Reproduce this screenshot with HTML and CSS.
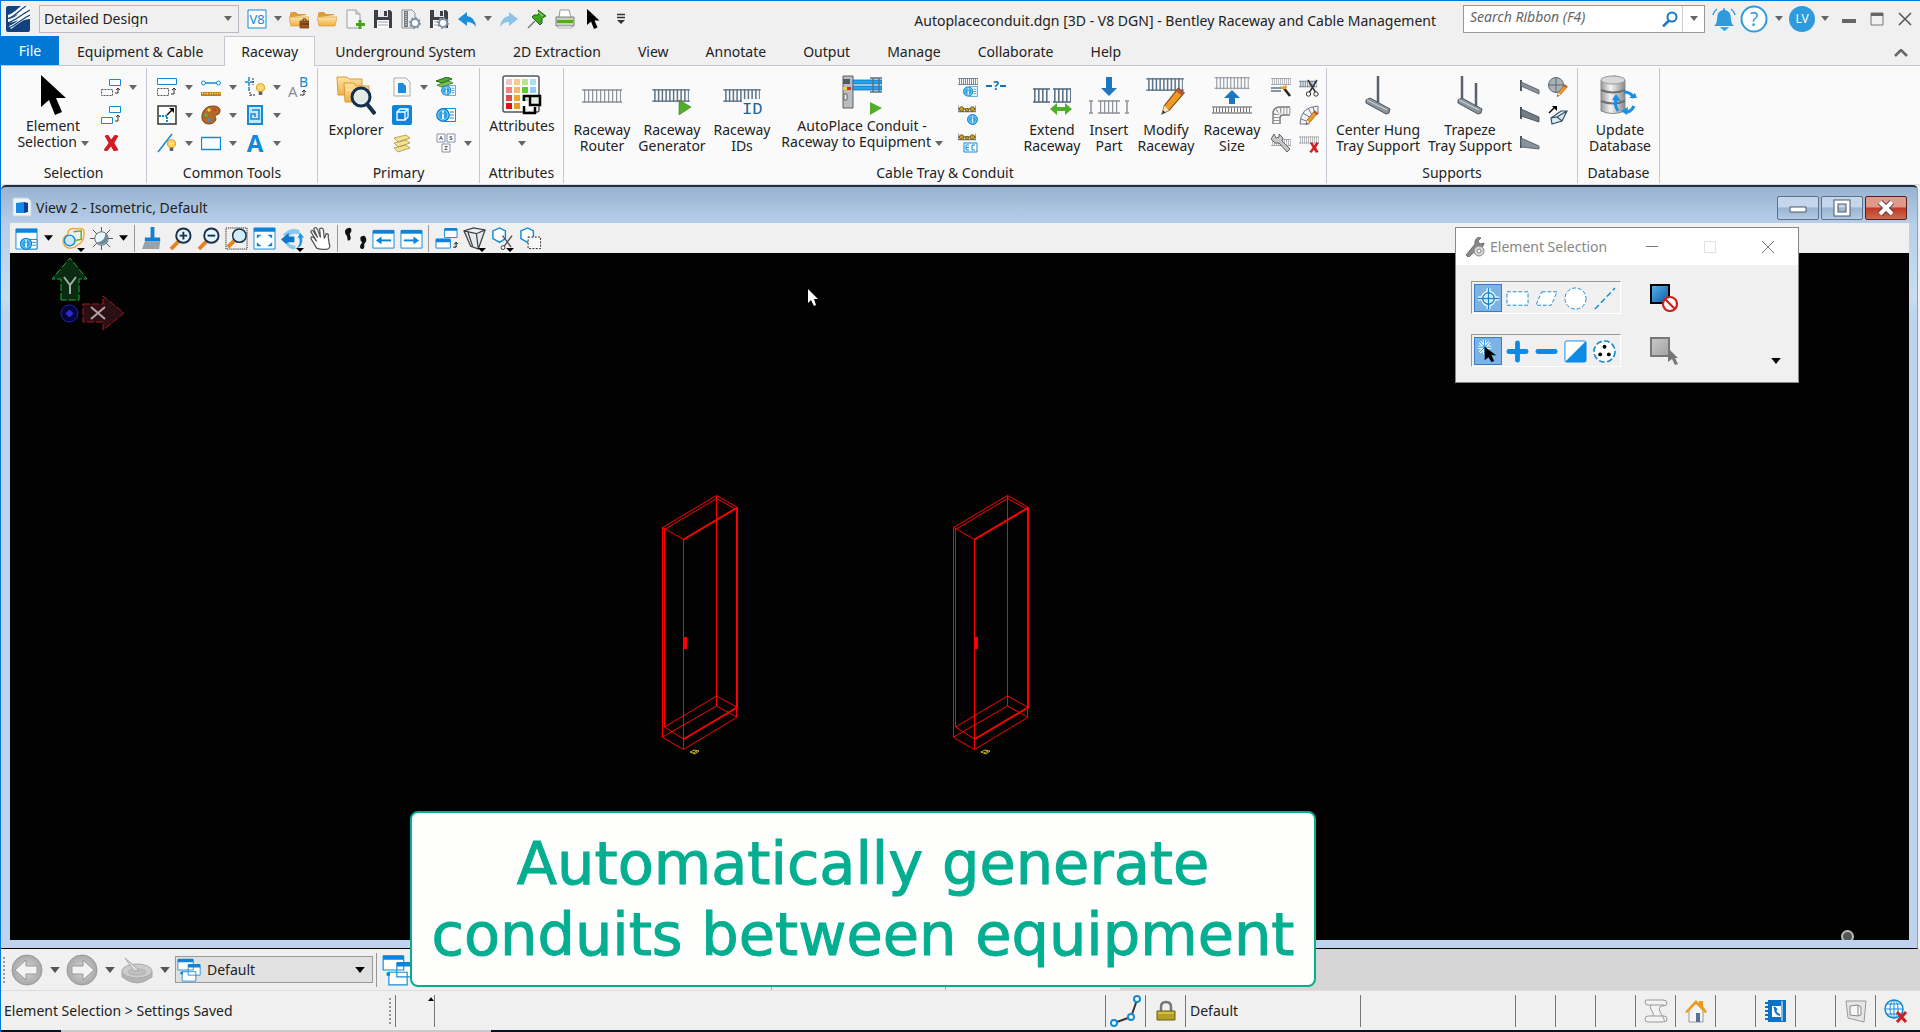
FILE: index.html
```html
<!DOCTYPE html>
<html lang="en">
<head>
<meta charset="utf-8">
<title>Autoplaceconduit.dgn - Bentley Raceway and Cable Management</title>
<link rel="stylesheet" href="styles.css">
</head>
<body>
<svg class="sprite" aria-hidden="true">
  <defs>
    <linearGradient id="gFold" x1="0" y1="0" x2="0" y2="1"><stop offset="0" stop-color="#ffe3a0"/><stop offset="1" stop-color="#efb04c"/></linearGradient>
    <linearGradient id="gMetal" x1="0" y1="0" x2="1" y2="0"><stop offset="0" stop-color="#9a9a9a"/><stop offset=".4" stop-color="#f4f4f4"/><stop offset="1" stop-color="#8a8a8a"/></linearGradient>
    <linearGradient id="gBlue" x1="0" y1="0" x2="1" y2="1"><stop offset="0" stop-color="#58b4f0"/><stop offset="1" stop-color="#0b5c9c"/></linearGradient>
    <linearGradient id="gGray" x1="0" y1="0" x2="1" y2="1"><stop offset="0" stop-color="#c8c8c8"/><stop offset="1" stop-color="#a4a4a4"/></linearGradient>
    <radialGradient id="gDisc"><stop offset="0" stop-color="#d6d6d6"/><stop offset="1" stop-color="#a9a9a9"/></radialGradient>
  </defs>
  <symbol id="down" viewBox="0 0 8 5"><path d="M0 0h8L4 5z"/></symbol>
  <symbol id="cursor" viewBox="0 0 26 40"><path d="M1 0v32l8-7 6 15 7-3-6-14h10z" fill="#000"/></symbol>
  <symbol id="tray" viewBox="0 0 40 16"><path d="M0 2h40M0 14h40" stroke="#8d9298" stroke-width="1.4"/><path d="M2 8h37" stroke="#8d9298" stroke-width="14" stroke-dasharray="1.2 2.8"/></symbol>
  <symbol id="trayb" viewBox="0 0 40 16"><path d="M0 2h40M0 14h40" stroke="#4d6479" stroke-width="1.4"/><path d="M2 8h37" stroke="#5d7488" stroke-width="14" stroke-dasharray="1.6 2.4"/></symbol>
  <symbol id="info" viewBox="0 0 12 12"><circle cx="6" cy="6" r="5.4" fill="#2ea2e4" stroke="#0a7cc8"/><circle cx="6" cy="6" r="4.2" fill="none" stroke="#9fdcff" stroke-width=".7"/><path d="M6 5v4.4M6 2.6v1.4" stroke="#fff" stroke-width="1.5"/></symbol>
  <symbol id="pencil" viewBox="0 0 20 24"><path d="M15 1l5 4L7 20l-6 3 2-7z" fill="#f09a23" stroke="#7c4a10"/><path d="M15 1l5 4-2 2.500-5-4z" fill="#b5563f"/><path d="M3 16l4 4-6 3z" fill="#f6e0bd"/><path d="M2 20l2 2-3 1z" fill="#333"/></symbol>
  <symbol id="redx" viewBox="0 0 16 16"><path d="M2 1l3-1 3 5 4-5 3 1-4 7 4 7-4 1-3-5-4 5-3-1 5-7z" fill="#d8191d" stroke="#a80d10" stroke-width=".6"/></symbol>

  <symbol id="logo" viewBox="0 0 24 26"><rect width="24" height="26" rx="2" fill="#11427f"/><path d="M2 9C8 7 11 3 15 0h9v13C17 13 12 18 5 23L3 20q7-3 9-6-5 3-10 3v-4q7-1 10-5-5 3-10 4z" fill="#fff"/><path d="M1 13C9 11 12 5 20 0M1 17C10 15 14 9 24 4M3 22C12 18 15 13 24 9" stroke="#11427f" stroke-width="1.200" fill="none"/></symbol>
  <symbol id="folder" viewBox="0 0 20 20"><path d="M1 5q0-2 2-2h4l2 2h8v3H1z" fill="#dd9d3a"/><path d="M3 8l15-2v2H3z" fill="#fff2d0"/><path d="M0 8h20l-2 9H2z" fill="url(#gFold)" stroke="#d99a36" stroke-width=".7"/></symbol>
  <symbol id="folderwork" viewBox="0 0 20 20"><use href="#folder"/><path d="M11 12h9v7h-9z" fill="#9b5a22" stroke="#643610" stroke-width=".7"/><path d="M14 12v-2h3v2M11 15h9" stroke="#4f2c10" fill="none"/></symbol>
  <symbol id="newdoc" viewBox="0 0 20 20"><path d="M2 1h9l4 4v14H2z" fill="#f4f5f6" stroke="#9a9ea3"/><path d="M11 1v4h4" fill="#d9dde0" stroke="#9a9ea3"/><path d="M15 11v9M11 15.500h9" stroke="#4aa320" stroke-width="3"/></symbol>
  <symbol id="save" viewBox="0 0 20 20"><path d="M1 1h16l2 2v16H1z" fill="#3c3f45"/><path d="M5 1h10v7H5z" fill="#e6e8ea"/><path d="M11 2h3v5h-3z" fill="#3c3f45"/><path d="M4 11h12v8H4z" fill="#fff"/><path d="M5 13h10M5 16h10" stroke="#9a9ea3"/></symbol>
  <symbol id="gear" viewBox="0 0 12 12"><circle cx="6" cy="6" r="4" fill="#fff" stroke="#8193a5" stroke-width="2"/><circle cx="6" cy="6" r="5.200" fill="none" stroke="#8193a5" stroke-width="1.500" stroke-dasharray="2 2"/></symbol>
  <symbol id="docgear" viewBox="0 0 20 20"><path d="M1 1h10l3 3v15H1z" fill="#eceeef" stroke="#8e9297"/><path d="M3 2h4v16H3z" fill="#777c82"/><path d="M5 3v14" stroke="#fff" stroke-dasharray="1 1"/><use href="#gear" x="8" y="8" width="12" height="12"/></symbol>
  <symbol id="savegear" viewBox="0 0 20 20"><use href="#save"/><use href="#gear" x="8" y="8" width="12" height="12"/></symbol>
  <symbol id="undo" viewBox="0 0 20 20"><path d="M1 10l9-7v4q8 1 9 11-3-5-9-5v4z" fill="#1b8edb"/></symbol>
  <symbol id="redo" viewBox="0 0 20 20"><path d="M19 10l-9-7v4q-8 1-9 11 3-5 9-5v4z" fill="#8cc3ea"/></symbol>
  <symbol id="pin" viewBox="0 0 20 20"><path d="M1 19l7-7" stroke="#777" stroke-width="1.500"/><path d="M11 1l8 6-2 1-2 1v5l-2 2-8-8 2-2 4 0 1-3z" fill="#3fa51f" stroke="#22680f"/><path d="M11 3l5 4" stroke="#b5e89e"/></symbol>
  <symbol id="printer" viewBox="0 0 20 20"><path d="M5 1h9l2 8H4z" fill="#fff" stroke="#999"/><path d="M1 8h18v9H1z" fill="#c9ccce" stroke="#7e8286"/><path d="M2 11h16v3H2z" fill="#4bb01c"/><path d="M3 17h14v2H3z" fill="#f4f4f4" stroke="#999" stroke-width=".6"/></symbol>
  <symbol id="more" viewBox="0 0 10 12"><path d="M1 1.500h8M1 4.500h8" stroke="#333" stroke-width="1.500"/><path d="M1 7h8l-4 4z" fill="#333"/></symbol>
  <symbol id="search" viewBox="0 0 16 16"><circle cx="10" cy="6" r="4.500" fill="none" stroke="#1b76c6" stroke-width="2"/><path d="M7 9.500l-6 6" stroke="#1b76c6" stroke-width="2.500"/></symbol>
  <symbol id="bell" viewBox="0 0 24 24"><path d="M12 1q1 0 1 2 6 1 6 9 0 5 3 7H2q3-2 3-7 0-8 6-9 0-2 1-2z" fill="#2f9bdc"/><path d="M10 21h5l-2.500 2zM5 2Q2 4 1 8M19 2q3 2 4 6" stroke="#2f9bdc" fill="none" stroke-width="1.500"/></symbol>
  <symbol id="min" viewBox="0 0 14 14"><path d="M0 7h14v4H0z" fill="#666"/></symbol>
  <symbol id="max" viewBox="0 0 14 14"><path d="M1 1h12v12H1z" fill="none" stroke="#777"/><path d="M1 1h12v3H1z" fill="#666"/></symbol>
  <symbol id="close" viewBox="0 0 14 14"><path d="M1 1l12 12M13 1L1 13" stroke="#555" stroke-width="1.500"/></symbol>
  <symbol id="caret" viewBox="0 0 14 8"><path d="M1 7l6-6 6 6" fill="none" stroke="#666" stroke-width="2.500"/></symbol>

  <symbol id="bringfwd" viewBox="0 0 20 20"><path d="M8.500 2.500h11v6h-11z" fill="#fff" stroke="#1489d6"/><path d="M.5 12.500h11v6H.5z" fill="none" stroke="#555" stroke-dasharray="2 1"/><path d="M14 16h3v-4M15 13l2-2 2 2" stroke="#333" fill="none"/></symbol>
  <symbol id="ungroup" viewBox="0 0 20 20"><path d="M8.500 1.500h11v6h-11zM.5 12.500h11v6H.5z" fill="#fff" stroke="#1489d6"/><path d="M14 16h3v-5M15 12l2-2 2 2" stroke="#333" fill="none"/></symbol>
  <symbol id="elemattr" viewBox="0 0 20 20"><path d="M.5 1.500h19v6H.5z" fill="#fff" stroke="#1489d6"/><path d="M.5 11.500h11v7H.5z" fill="none" stroke="#555" stroke-dasharray="2 1"/><path d="M14 17h3v-5M15 13l2-2 2 2" stroke="#333" fill="none"/></symbol>
  <symbol id="measure" viewBox="0 0 20 20"><path d="M2 6h16" stroke="#1489d6" stroke-width="1.500"/><circle cx="2.500" cy="6" r="2" fill="#fff" stroke="#1489d6"/><circle cx="17.500" cy="6" r="2" fill="#fff" stroke="#1489d6"/><path d="M0 15h20v4H0z" fill="#c07d1d"/><path d="M1 16.500h19" stroke="#fff0b0" stroke-width="1.500" stroke-dasharray="1 1.500"/></symbol>
  <symbol id="bulb" viewBox="0 0 10 14"><circle cx="5" cy="5" r="4.500" fill="#ffd45e" stroke="#d89617"/><path d="M3.500 4L5 6l1.500-2" stroke="#fff" fill="none"/><path d="M3 9.500h4V13H3z" fill="#55585c"/></symbol>
  <symbol id="snap" viewBox="0 0 20 20"><path d="M4 0v15M0 5h10" stroke="#1489d6" stroke-width="1.500" stroke-dasharray="4 1"/><path d="M8 1v7M5 18h6M5 15v4" stroke="#333" stroke-dasharray="2 1"/><use href="#bulb" x="11" y="6" width="9" height="13"/></symbol>
  <symbol id="scale" viewBox="0 0 20 20"><path d="M1 1h18v18H1z" fill="#fff" stroke="#333" stroke-width="1.500"/><path d="M2 11h8v8" stroke="#1489d6" stroke-width="2" stroke-dasharray="2 1" fill="none"/><path d="M10 10l6-6" stroke="#000" stroke-width="1.500"/><path d="M12 3h5v5z"/></symbol>
  <symbol id="palette" viewBox="0 0 20 20"><path d="M12 1q8 0 7 6-1 3-4 3-2 1 0 4-1 5-8 5-7-1-6-9Q3 1 12 1z" fill="#b06a2c" stroke="#7d4415"/><circle cx="14" cy="5" r="1.800" fill="#e23b2c"/><circle cx="8" cy="5" r="1.700" fill="#f2d14a"/><circle cx="5" cy="10" r="1.700" fill="#58b947"/><circle cx="8" cy="15" r="1.700" fill="#3f8ce0"/></symbol>
  <symbol id="fence" viewBox="0 0 20 20"><path d="M3 1h14v18H3z" fill="#c5e5f9" stroke="#1489d6" stroke-width="2"/><path d="M7 5h7v9H6V9h4v3" fill="none" stroke="#1489d6" stroke-width="1.500"/></symbol>
  <symbol id="linebulb" viewBox="0 0 20 20"><path d="M1 19L15 1" stroke="#1489d6" stroke-width="1.500"/><use href="#bulb" x="10" y="6" width="9" height="13"/></symbol>
  <symbol id="rect" viewBox="0 0 20 20"><path d="M.5 4.500h19v12H.5z" fill="#fff" stroke="#1489d6" stroke-width="1.300"/></symbol>

  <symbol id="explorer" viewBox="0 0 40 40"><path d="M1 2h10l2 2h13v16H2z" fill="url(#gFold)" stroke="#d99a36"/><path d="M8 8h10l2 3h13v16H9z" fill="url(#gFold)" stroke="#d99a36"/><path d="M10 15h22" stroke="#fff3cf"/><circle cx="25" cy="22" r="9" fill="#dff1fb" fill-opacity=".85" stroke="#14304d" stroke-width="3"/><path d="M31 29l8 10" stroke="#14304d" stroke-width="4"/></symbol>
  <symbol id="docblue" viewBox="0 0 20 20"><path d="M2 1h12l4 4v14H2z" fill="#fafafa" stroke="#aaa"/><path d="M6 6h5l3 3v7H6z" fill="#1f8bdc"/></symbol>
  <symbol id="cube" viewBox="0 0 20 20"><rect width="20" height="20" rx="2" fill="#0d84dc"/><path d="M5 7h8v8H5zM5 7l3-3h8v8l-3 3M13 7l3-3" fill="none" stroke="#fff" stroke-width="1.300"/></symbol>
  <symbol id="layers" viewBox="0 0 20 20"><path d="M2 15l12-3 4 3-12 4zM2 10l12-3 4 3-12 4zM2 5l12-3 4 3-12 4z" fill="#f3e093" stroke="#a8943c" stroke-width=".8"/></symbol>
  <symbol id="list" viewBox="0 0 20 20"><path d="M8.500 3.500h11v13h-11z" fill="#fff" stroke="#1489d6"/><path d="M14 7h4M14 10h4M14 13h4" stroke="#1489d6"/><use href="#info" x="0" y="3" width="14" height="14"/></symbol>
  <symbol id="layerinfo" viewBox="0 0 20 20"><path d="M0 4l11-4 5 2-10 4z" fill="#4faa2f" stroke="#2b6a17"/><path d="M1 8l12-4 4 2-12 4z" fill="#7cc65c" stroke="#2b6a17" stroke-width=".7"/><g transform="translate(5 6) scale(.75)"><use href="#list" width="20" height="20"/></g></symbol>
  <symbol id="attrs" viewBox="0 0 40 40"><rect x="1" y="1" width="36" height="36" rx="2" fill="#fff" stroke="#555" stroke-width="1.500"/><path d="M4 4h6v6H4z" fill="#f4c4c4"/><path d="M12 4h6v6h-6z" fill="#f7c98f"/><path d="M20 4h6v6h-6z" fill="#b9e48b"/><path d="M28 4h6v6h-6z" fill="#aadff2"/><path d="M4 12h6v6H4z" fill="#ee8484"/><path d="M12 12h6v6h-6z" fill="#f6b868"/><path d="M20 12h6v6h-6z" fill="#5fc92f"/><path d="M28 12h6v6h-6z" fill="#8ecdf0"/><path d="M4 20h6v6H4z" fill="#e24848"/><path d="M12 20h6v6h-6z" fill="#f2a437"/><path d="M20 20h6v6h-6z" fill="#b5ddb0"/><path d="M4 28h6v6H4z" fill="#dc1414"/><path d="M12 28h6v6h-6z" fill="#ee9a1c"/><path d="M22 26v-5h7M22 31v7h6M28 21h10v9H28zM33 32v6h-7" fill="#dfeee4" stroke="#000" stroke-width="2.500"/></symbol>

  <symbol id="router" viewBox="0 0 40 40"><use href="#tray" y="13" width="40" height="16"/></symbol>
  <symbol id="generator" viewBox="0 0 40 40"><use href="#trayb" y="13" width="38" height="15"/><path d="M27 25l12 7-12 8z" fill="#52ae2a" stroke="#35821a" stroke-width=".6"/></symbol>
  <symbol id="autoplace" viewBox="0 0 40 40"><path d="M1 1h10v32H1z" fill="#b9bdc1" stroke="#5b6167"/><path d="M1 4h7v5H1z" fill="#555a60"/><path d="M1 12h4v3H1z" fill="#e8d22c"/><path d="M5 12h4v3H5z" fill="#d62a22"/><path d="M2 19h3v6H2z" fill="#eee" stroke="#666"/><path d="M11 5h29v4H11zM11 11h29v4H11z" fill="#2aa2ea" stroke="#0d6fb8" stroke-width=".8"/><path d="M28 3h12M28 17h12M31 3v14M37 3v14" stroke="#5b6f80" stroke-width="1.400"/><path d="M28 27l12 6-12 7z" fill="#52ae2a"/></symbol>
  <symbol id="traylist" viewBox="0 0 20 20"><use href="#trayb" width="20" height="9"/><g transform="translate(5 7) scale(.75)"><use href="#list" width="20" height="20"/></g></symbol>
  <symbol id="cond" viewBox="0 0 20 8"><path d="M0 0v7h20V0M0 4h20" fill="none" stroke="#777" stroke-width="1.400"/><circle cx="4" cy="4" r="2.500" fill="#c9a227" stroke="#6f5a12"/><circle cx="10" cy="5" r="1.800" fill="#c9a227" stroke="#6f5a12"/><circle cx="16" cy="4" r="2.500" fill="#c9a227" stroke="#6f5a12"/></symbol>
  <symbol id="condinfo" viewBox="0 0 20 20"><use href="#cond" width="18" height="8"/><use href="#info" x="9" y="9" width="11" height="11"/></symbol>
  <symbol id="condec" viewBox="0 0 20 20"><use href="#cond" width="18" height="8"/><path d="M6 10h13v9H6z" fill="#fff" stroke="#1489d6"/><path d="M11 12H8v5h3M8 14.500h3M17 12h-3v5h3" fill="none" stroke="#1489d6"/></symbol>
  <symbol id="extend" viewBox="0 0 40 40"><path d="M1 14h17M1 27h17M21 14h18M21 27h18" stroke="#4d6479" stroke-width="1.500"/><path d="M2 20.500h16M22 20.500h17" stroke="#5d7488" stroke-width="14" stroke-dasharray="1.600 2.400"/><path d="M18 34l7-6v4h8v-4l7 6-7 6v-4h-8v4z" fill="#52ae2a"/></symbol>
  <symbol id="insert" viewBox="0 0 40 40"><path d="M17 2h6v11h5l-8 8-8-8h5z" fill="#1c76c0"/><path d="M9 26h22M9 38h22M0 26h4M2 26v12M0 38h4M36 26h4M38 26v12M36 38h4" stroke="#8d9298" stroke-width="1.500"/><path d="M11 32h19" stroke="#8d9298" stroke-width="13" stroke-dasharray="1.200 2.800"/></symbol>
  <symbol id="modify" viewBox="0 0 40 40"><use href="#trayb" y="2" width="38" height="15"/><use href="#pencil" x="14" y="12" width="25" height="28"/></symbol>
  <symbol id="size" viewBox="0 0 40 40"><use href="#tray" y="1" width="40" height="14"/><path d="M17 29v-6h-5l8-8 8 8h-5v6z" fill="#1c76c0"/><path d="M0 32h40M0 38h40" stroke="#555"/><path d="M1 35h39" stroke="#777" stroke-width="5" stroke-dasharray="1 2"/></symbol>
  <symbol id="wand" viewBox="0 0 20 20"><use href="#tray" width="20" height="9"/><path d="M0 11h12M0 14h10" stroke="#5d7488" stroke-width="1.500"/><path d="M12 10l7 9" stroke="#222" stroke-width="2.500"/><path d="M9 9l4 1 2-3 1 4-4 2z" fill="#e9a51c"/></symbol>
  <symbol id="bend" viewBox="0 0 20 20"><path d="M2 19V9q0-7 7-7h10M9 19v-6q0-3 3-3h7" fill="none" stroke="#777" stroke-width="1.400"/><path d="M5.500 19v-9q0-4 5-4h9" fill="none" stroke="#8d9298" stroke-width="6" stroke-dasharray="1 2"/></symbol>
  <symbol id="wrench" viewBox="0 0 20 20"><use href="#tray" y="5" width="20" height="9"/><path d="M3 1l2 4 3-1v-3l4 4-1 3 8 8-3 3-8-9-4 0-4-4z" fill="#c4c6c8" stroke="#666"/></symbol>
  <symbol id="cut" viewBox="0 0 20 20"><use href="#trayb" y="3" width="18" height="8"/><path d="M9 3l8 13M18 3l-8 13" stroke="#333" stroke-width="1.500"/><circle cx="9.500" cy="17" r="2.200" fill="#fff" stroke="#333"/><circle cx="17" cy="17" r="2.200" fill="#fff" stroke="#333"/></symbol>
  <symbol id="bendedit" viewBox="0 0 20 20"><path d="M1 19q0-17 18-18v8q-9 1-9 10zM4 8l8 5M9 3l4 7M2 14l8 3M14 2l2 7" fill="#f4f4f4" stroke="#68798a"/><use href="#pencil" x="6" y="5" width="13" height="15"/></symbol>
  <symbol id="traydel" viewBox="0 0 20 20"><use href="#tray" y="3" width="20" height="8"/><use href="#redx" x="10" y="9" width="10" height="11"/></symbol>
  <symbol id="hung" viewBox="0 0 40 40"><path d="M20 1v29" stroke="#59626a" stroke-width="2.500"/><path d="M8 25l4-2 20 11-1 4-3 1L8 28z" fill="#89939b" stroke="#4e565d"/><path d="M9 25l20 10" stroke="#d7dcdf"/></symbol>
  <symbol id="trapeze" viewBox="0 0 40 40"><path d="M12 1v27M26 8v26" stroke="#59626a" stroke-width="2.500"/><path d="M8 25l4-2 20 11-1 4-3 1L8 28z" fill="#89939b" stroke="#4e565d"/><path d="M9 25l20 10" stroke="#d7dcdf"/></symbol>
  <symbol id="arm1" viewBox="0 0 20 20"><path d="M1 3v11" stroke="#4e565d" stroke-width="2"/><path d="M1 5l18 8v4L1 9z" fill="#89939b" stroke="#4e565d" stroke-width=".8"/></symbol>
  <symbol id="arm2" viewBox="0 0 20 20"><path d="M1 2v12" stroke="#4e565d" stroke-width="2"/><path d="M1 4l18 8v5L1 11z" fill="#737d86" stroke="#3e464d" stroke-width=".8"/></symbol>
  <symbol id="arm3" viewBox="0 0 20 20"><path d="M1 3v12" stroke="#4e565d" stroke-width="2"/><path d="M1 5l18 8v3L1 14z" fill="#89939b" stroke="#4e565d" stroke-width=".8"/></symbol>
  <symbol id="globeedit" viewBox="0 0 20 20"><circle cx="8" cy="8" r="7.500" fill="#aab2b9" stroke="#5f676e"/><path d="M8 0v16M0 8h16" stroke="#5f676e" fill="none"/><use href="#pencil" x="8" y="7" width="12" height="13"/></symbol>
  <symbol id="boxout" viewBox="0 0 20 20"><path d="M3 13l10-7h6l-5 10-10 3zM3 13l6-1 5 4M9 12l10-6" fill="#dfe9f0" stroke="#34516b" stroke-width="1.200"/><path d="M1 8l6-6" stroke="#000" stroke-width="1.500"/><path d="M4 1h5v5z"/></symbol>
  <symbol id="database" viewBox="0 0 40 40"><path d="M1 5q14-8 24 0v31q-12 5-24 0z" fill="url(#gMetal)" stroke="#8a8a8a"/><ellipse cx="13" cy="5" rx="12" ry="4" fill="#d8d8d8" stroke="#999"/><path d="M1 15q12 5 24 0M1 26q12 5 24 0" stroke="#707070" stroke-width="2" fill="none"/><path d="M18 36q-4-6-2-12M24 17q7 0 10 6M34 31q-3 6-8 6" stroke="#1c8fe0" stroke-width="3" fill="none"/><path d="M12 25l4-6 5 7zM29 23h8l-2-5zM28 32l-7 4 6 4z" fill="#1c8fe0"/></symbol>

  <symbol id="viewicon" viewBox="0 0 20 20"><path d="M1 1h15l3 3v15H1z" fill="#eef5fb" stroke="#c3d2e0"/><path d="M4 6l8-1v11H4z" fill="#1489e8"/><path d="M12 5l4 1v9l-4 1z" fill="#0a3c98"/></symbol>
  <symbol id="vattr" viewBox="0 0 24 24"><path d="M1 2h22v21H1z" fill="#fff" stroke="#1489d6"/><path d="M1 2h22v4H1z" fill="#0d84dc"/><path d="M14 13h9v10h-9z" fill="#fff" stroke="#1489d6"/><path d="M18 16h4M18 19h4" stroke="#1489d6"/><use href="#info" x="5" y="11" width="13" height="13"/></symbol>
  <symbol id="vdisplay" viewBox="0 0 24 24"><path d="M3 20Q-2 12 6 8q0-8 9-6 9-2 8 5 0 9-7 12-7 6-13 1z" fill="none" stroke="#f0a732" stroke-width="1.500"/><circle cx="8" cy="14" r="5.500" fill="#cbe8fb" stroke="#1489d6" stroke-width="1.500"/><path d="M12 5l8-1v9l-7 1" fill="none" stroke="#5faf2b" stroke-width="1.500"/></symbol>
  <symbol id="sun" viewBox="0 0 24 24"><path d="M12 0v24M0 12h24M3 3l18 18M21 3L3 21" stroke="#555"/><circle cx="12" cy="12" r="7" fill="#e9f6fa" stroke="#667"/><path d="M7 16q8 0 9-9 5 4 1 9-5 5-10 0z" fill="#668a99"/></symbol>
  <symbol id="brush" viewBox="0 0 24 24"><path d="M10 0h4v11h6v4H4v-4h6z" fill="#1480d2"/><path d="M4 15h16l-1 8H1z" fill="#9aa2a9"/></symbol>
  <symbol id="zoomin" viewBox="0 0 24 24"><path d="M2 23l9-9" stroke="#e58421" stroke-width="4"/><circle cx="15" cy="9" r="7.500" fill="#e8f4fb" stroke="#16324e" stroke-width="2"/><path d="M15 5v8M11 9h8" stroke="#16324e" stroke-width="2"/></symbol>
  <symbol id="zoomout" viewBox="0 0 24 24"><path d="M2 23l9-9" stroke="#e58421" stroke-width="4"/><circle cx="15" cy="9" r="7.500" fill="#e8f4fb" stroke="#16324e" stroke-width="2"/><path d="M11 9h8" stroke="#16324e" stroke-width="2"/></symbol>
  <symbol id="zoomwin" viewBox="0 0 24 24"><path d="M1 1h22v22H1z" fill="none" stroke="#000" stroke-dasharray="1 1"/><path d="M3 21l8-8" stroke="#e58421" stroke-width="4"/><circle cx="15" cy="9" r="7" fill="#d2ebf8" stroke="#16324e" stroke-width="1.500"/></symbol>
  <symbol id="fit" viewBox="0 0 24 24"><path d="M1 1h22v22H1z" fill="#fff" stroke="#1489d6"/><path d="M1 1h22v4H1zM4 8h5l-5 4zM20 8h-5l5 4zM4 20h5l-5-4zM20 20h-5l5-4z" fill="#0d84dc"/></symbol>
  <symbol id="rotate" viewBox="0 0 24 24"><path d="M2 8q7-8 17-5l1 5q-8-3-13 3" fill="#8ac9ef"/><path d="M0 13l8-7v4h6v6H8v4z" fill="#0f78ca"/><path d="M15 23q6-4 4-12l-2 1 3-6 4 5-2 0q2 9-7 12z" fill="#1f97e4"/><path d="M5 18q4 6 10 5v-4q-5 1-7-3z" fill="#8ac9ef"/></symbol>
  <symbol id="hand" viewBox="0 0 24 24"><path d="M8 22L2 12q0-3 3-1l3 4L2 5q1-3 3 0l4 6L5 2q2-3 4 1l3 8-1-9q3-2 4 1l1 9 2-5q3 0 2 3l1 7q2 5-2 6-6 1-11-1z" fill="#fff" stroke="#555" stroke-width="1.300"/></symbol>
  <symbol id="walk" viewBox="0 0 24 24"><path d="M1 4q2-4 6-3 2 3-1 6l1 4q0 4-3 3L3 9Q1 8 1 4zM17 12q0-3 4-3 3 2 2 6l-2 3q1 5-2 5-3 0-2-4l2-3q-2-1-2-4z" fill="#111"/></symbol>
  <symbol id="prev" viewBox="0 0 24 24"><path d="M1 4h22v18H1z" fill="#fff" stroke="#1489d6"/><path d="M1 3h22v4H1z" fill="#0d84dc"/><path d="M8 14h12" stroke="#0d84dc" stroke-width="2"/><path d="M4 14l6-4v8z" fill="#0d84dc"/></symbol>
  <symbol id="next" viewBox="0 0 24 24"><path d="M1 4h22v18H1z" fill="#fff" stroke="#1489d6"/><path d="M1 3h22v4H1z" fill="#0d84dc"/><path d="M4 14h12" stroke="#0d84dc" stroke-width="2"/><path d="M20 14l-6-4v8z" fill="#0d84dc"/></symbol>
  <symbol id="copyview" viewBox="0 0 24 24"><path d="M10 2h13v9H10zM1 13h15v9H1z" fill="#fff" stroke="#1489d6"/><path d="M10 1h13v3H10zM1 12h15v4H1z" fill="#0d84dc"/><path d="M19 21h3v-5M20 18l2-2 2 2" fill="none" stroke="#000"/></symbol>
  <symbol id="persp" viewBox="0 0 24 24"><path d="M1 4l10-3 12 2-7 20-8-3zM1 4l13 3 9-4M14 7l2 16M5 5l5 15" fill="#e6eaec" stroke="#3c4247" stroke-width="1.300"/></symbol>
  <symbol id="clipvol" viewBox="0 0 24 24"><path d="M2 4l7-3 6 3v8l-6 4-7-4z" fill="#fff" stroke="#1489d6" stroke-width="1.500"/><path d="M12 9l9 12M22 9l-9 12" stroke="#555" stroke-width="1.500"/><circle cx="12.500" cy="21.500" r="2" fill="#fff" stroke="#333"/></symbol>
  <symbol id="clipmask" viewBox="0 0 24 24"><path d="M2 4l7-3 6 3v8l-6 4-7-4z" fill="#fff" stroke="#1489d6" stroke-width="1.500"/><path d="M9.500 10.500h13v12h-13z" fill="#f8f8f8" stroke="#222" stroke-dasharray="2 1.500"/></symbol>

  <symbol id="tools" viewBox="0 0 20 20"><path d="M1 18l9-11q-1-5 4-7l2 1-3 3 2 3 4-1q0 5-6 5L4 20q-2 0-3-2z" fill="#888" stroke="#555" stroke-width=".7"/><circle cx="14" cy="14" r="5" fill="#d5d7da" stroke="#888"/><circle cx="14" cy="14" r="2" fill="#fff" stroke="#888"/></symbol>
  <symbol id="selpoint" viewBox="0 0 24 24"><circle cx="12" cy="12" r="6" fill="none" stroke="#fff" stroke-width="4"/><path d="M12 1v22M1 12h22" stroke="#fff" stroke-width="4"/><circle cx="12" cy="12" r="6" fill="none" stroke="#1489d6" stroke-width="1.500"/><path d="M12 1v22M1 12h22" stroke="#1489d6" stroke-width="1.500"/></symbol>
  <symbol id="selblock" viewBox="0 0 24 24"><path d="M1 5h22v14H1z" fill="#fff" stroke="#1489d6" stroke-dasharray="4 2"/></symbol>
  <symbol id="selshape" viewBox="0 0 24 24"><path d="M7 5h16l-6 14H1z" fill="#fff" stroke="#1489d6" stroke-dasharray="4 2"/></symbol>
  <symbol id="selcircle" viewBox="0 0 24 24"><circle cx="12" cy="12" r="11" fill="#fff" stroke="#1489d6" stroke-dasharray="4 2"/></symbol>
  <symbol id="selline" viewBox="0 0 24 24"><path d="M2 23L23 1" stroke="#1489d6" stroke-width="1.500" stroke-dasharray="6 3"/></symbol>
  <symbol id="selnew" viewBox="0 0 24 24"><path d="M8 0v15M1 7.500h14M3 2l10 11M13 2L3 13" stroke="#fff" stroke-width="3"/><path d="M8 0v15M1 7.500h14M3 2l10 11M13 2L3 13" stroke="#1489d6"/><path d="M8 7v14l4-3 3 5 3-1-3-6h5z"/></symbol>
  <symbol id="seladd" viewBox="0 0 24 24"><path d="M12 3v18M3 12h18" stroke="#0d8ae4" stroke-width="5" stroke-linecap="round"/></symbol>
  <symbol id="selsub" viewBox="0 0 24 24"><path d="M3 12h18" stroke="#0d8ae4" stroke-width="5" stroke-linecap="round"/></symbol>
  <symbol id="selinv" viewBox="0 0 24 24"><rect x="1" y="1" width="22" height="22" rx="2" fill="#fff" stroke="#0d8ae4"/><path d="M23 1v22H1z" fill="#0d8ae4"/></symbol>
  <symbol id="selall" viewBox="0 0 24 24"><circle cx="12" cy="12" r="11" fill="#fff" stroke="#1489d6" stroke-width="1.700" stroke-dasharray="6 2.500"/><circle cx="12" cy="7" r="2"/><circle cx="7.500" cy="15" r="2"/><circle cx="16.500" cy="15" r="2"/></symbol>
  <symbol id="disable" viewBox="0 0 28 28"><path d="M1 1h18v18H1z" fill="url(#gBlue)" stroke="#000" stroke-width="2"/><circle cx="20" cy="20" r="7" fill="#fff" stroke="#d01f1f" stroke-width="2.200"/><path d="M15 15l10 10" stroke="#d01f1f" stroke-width="2.200"/></symbol>
  <symbol id="handles" viewBox="0 0 28 28"><path d="M1 1h18v18H1z" fill="url(#gGray)" stroke="#777" stroke-width="2"/><path d="M18 11v14l4-3 3 6 3-1-3-6h3z" fill="#777"/></symbol>

  <symbol id="back" viewBox="0 0 32 32"><circle cx="16" cy="16" r="15" fill="url(#gDisc)" stroke="#999"/><path d="M4 16l11-10v6h11v8H15v6z" fill="#f3f3f3" stroke="#999"/></symbol>
  <symbol id="fwd" viewBox="0 0 32 32"><circle cx="16" cy="16" r="15" fill="url(#gDisc)" stroke="#999"/><path d="M28 16L17 6v6H6v8h11v6z" fill="#f3f3f3" stroke="#999"/></symbol>
  <symbol id="dial" viewBox="0 0 32 32"><path d="M1 17v6q15 12 30 0v-6" fill="#b4b4b4" stroke="#aaa"/><ellipse cx="16" cy="17" rx="15" ry="7" fill="#ccc" stroke="#aaa"/><ellipse cx="16" cy="18" rx="9" ry="3" fill="#c0c0c0" stroke="#b0b0b0"/><path d="M4 4l14 12-5 1z" fill="#ddd" stroke="#aaa"/></symbol>
  <symbol id="views" viewBox="0 0 28 28"><path d="M1 2h18v12H1zM6 16h16v11H6zM13 8h14v12H13z" fill="#fff" stroke="#1489d6"/><path d="M1 1h18v4H1zM13 7h14v4H13zM4 16h3v3H4z" fill="#0d84dc"/></symbol>
  <symbol id="acs" viewBox="0 0 32 32"><path d="M4 28l17-6 6-17" fill="none" stroke="#333" stroke-width="2"/><circle cx="4" cy="28" r="3" fill="#fff" stroke="#1489d6" stroke-width="2"/><circle cx="21" cy="22" r="3" fill="#fff" stroke="#1489d6" stroke-width="2"/><circle cx="27" cy="4" r="3" fill="#fff" stroke="#1489d6" stroke-width="2"/></symbol>
  <symbol id="lock" viewBox="0 0 24 24"><path d="M7 12V8q0-5 5-5t5 5v4" fill="none" stroke="#777" stroke-width="2.500"/><path d="M3 12h18v9H3z" fill="#b3a022" stroke="#6d6110"/><path d="M4 14h16" stroke="#e9de7a"/></symbol>
  <symbol id="scroll" viewBox="0 0 24 24"><path d="M4 1h15q4 0 4 3t-4 3l-2 0q-3 2-1 6l3 5q3 5-1 5H4q-3 0-3-3t3-3h5q1-2-1-5-3-4-1-6H4q-3 0-3-3t3-2zM7 6h13M9 17h11q3 0 3 3t-3 3" fill="#f3f3f3" stroke="#999"/></symbol>
  <symbol id="home" viewBox="0 0 24 24"><path d="M5 11l7-7 7 7v12H5z" fill="#f4f4f4" stroke="#999"/><path d="M1 13L10 3l2-2 3 3V2h4v5l4 6-2 1-9-9-9 9z" fill="#ee9a1c"/><path d="M12 14h4v9h-4z" fill="#58719b"/></symbol>
  <symbol id="book" viewBox="0 0 24 24"><path d="M4 1h18v22H4z" fill="#0b72c8"/><path d="M3 3v19" stroke="#0b72c8" stroke-width="4" stroke-dasharray="2 2"/><path d="M18 2v20" stroke="#fff"/><path d="M8 7h9v11H8z" fill="#fff"/><path d="M11 9q0 6 5 7M10 8l3 3" stroke="#0b72c8" stroke-width="2" fill="none"/></symbol>
  <symbol id="box3d" viewBox="0 0 24 24"><path d="M2 2h20l-2 21-16-4z" fill="#e6e6e6" stroke="#999"/><path d="M6 7l8-1v11l-8-1zM14 6l3 2v8l-3 1" fill="#f7f7f7" stroke="#888"/></symbol>
  <symbol id="globex" viewBox="0 0 24 24"><circle cx="10" cy="10" r="9" fill="#fff" stroke="#1489d6" stroke-width="1.500"/><ellipse cx="10" cy="10" rx="4" ry="9" fill="none" stroke="#1489d6"/><path d="M1 10h18M10 1v18M3 5h14M3 15h14" stroke="#1489d6"/><path d="M13 13l9 10M22 13l-9 10" stroke="#d01f1f" stroke-width="3"/></symbol>

  <symbol id="cabinet" viewBox="0 0 80 260"><g fill="none" stroke="#f00"><path d="M1.500 32.500L55.500.5l21 12-54 32zM3.500 34.500L55.500 3.500l20 11M1.500 32.500v210l21 12 53-32v-10M3.500 34v198l19 12M22.500 44v210M55.500 1v210M3.500 232l52-31 20 11M1.500 242l54-31 20 11"/><path d="M76 12.500v200l-54 32" stroke-width="2"/><path d="M22.500 44.500l54-32" stroke-width="2"/></g><path d="M23 142h3v12h-3z" fill="#f00"/><path d="M29 257l4-2 5 1-4 3zM32 258l4-2" fill="none" stroke="#c8b432"/></symbol>
</svg>

<header class="titlebar">
  <svg class="logo"><use href="#logo"/></svg>
  <label class="combo workflow"><select aria-label="Workflow"><option>Detailed Design</option></select><svg class="down"><use href="#down"/></svg></label>
  <div class="quick">
    <button aria-label="V8"><svg viewBox="0 0 20 20"><path d="M1 1h18v18H1z" fill="#fff" stroke="#1489d6"/><text x="10" y="15" font-size="13" text-anchor="middle" fill="#1489d6">V8</text></svg></button><button class="drop" aria-label="V8 options"><svg class="down"><use href="#down"/></svg></button>
    <button aria-label="Work folder"><svg><use href="#folderwork"/></svg></button>
    <button aria-label="Open"><svg><use href="#folder"/></svg></button>
    <button aria-label="New"><svg><use href="#newdoc"/></svg></button>
    <button aria-label="Save"><svg><use href="#save"/></svg></button>
    <button aria-label="Compress"><svg><use href="#docgear"/></svg></button>
    <button aria-label="Save Settings"><svg><use href="#savegear"/></svg></button>
    <button aria-label="Undo"><svg><use href="#undo"/></svg></button><button class="drop" aria-label="Undo list"><svg class="down"><use href="#down"/></svg></button>
    <button aria-label="Redo"><svg><use href="#redo"/></svg></button>
    <button aria-label="Pin"><svg><use href="#pin"/></svg></button>
    <button aria-label="Print"><svg><use href="#printer"/></svg></button>
    <button aria-label="Select"><svg><use href="#cursor"/></svg></button>
    <button aria-label="Customize"><svg class="tiny"><use href="#more"/></svg></button>
  </div>
  <h1>Autoplaceconduit.dgn [3D - V8 DGN] - Bentley Raceway and Cable Management</h1>
  <form class="search"><input type="text" aria-label="Search Ribbon" placeholder="Search Ribbon (F4)"><button type="button" aria-label="Search"><svg class="tiny"><use href="#search"/></svg></button><button type="button" class="searchdrop" aria-label="Search options"><svg class="down"><use href="#down"/></svg></button></form>
  <div class="account">
    <button aria-label="Notifications"><svg class="mid"><use href="#bell"/></svg></button>
    <button aria-label="Help"><svg class="big" viewBox="0 0 28 28"><circle cx="14" cy="14" r="12.500" fill="#fff" stroke="#2f9bdc" stroke-width="2"/><text x="14" y="21" font-size="19" text-anchor="middle" fill="#2f9bdc">?</text></svg></button><button class="drop" aria-label="Help options"><svg class="down"><use href="#down"/></svg></button>
    <button class="avatar">LV</button><button class="drop" aria-label="Account options"><svg class="down"><use href="#down"/></svg></button>
  </div>
  <div class="winctl">
    <button aria-label="Minimize"><svg><use href="#min"/></svg></button>
    <button aria-label="Maximize"><svg><use href="#max"/></svg></button>
    <button aria-label="Close"><svg><use href="#close"/></svg></button>
  </div>
</header>

<nav class="tabs">
  <a class="file" href="#">File</a><a href="#">Equipment &amp; Cable</a><a class="active" href="#">Raceway</a><a href="#">Underground System</a><a href="#">2D Extraction</a><a href="#">View</a><a href="#">Annotate</a><a href="#">Output</a><a href="#">Manage</a><a href="#">Collaborate</a><a href="#">Help</a>
  <button class="collapse" aria-label="Collapse ribbon"><svg><use href="#caret"/></svg></button>
</nav>

<section class="ribbon">
  <div class="group g-selection"><div class="tools">
    <button class="large up"><svg><use href="#cursor"/></svg><span>Element<br>Selection <svg class="down"><use href="#down"/></svg></span></button>
    <div class="small c2">
      <button aria-label="Group"><svg><use href="#bringfwd"/></svg></button><button class="drop" aria-label="Group options"><svg class="down"><use href="#down"/></svg></button>
      <button aria-label="Ungroup"><svg><use href="#ungroup"/></svg></button><i></i>
      <button aria-label="Delete"><svg class="tiny"><use href="#redx"/></svg></button><i></i>
    </div></div><h2>Selection</h2></div>
  <div class="group g-common"><div class="tools">
    <div class="small c7">
      <button aria-label="Attributes"><svg><use href="#elemattr"/></svg></button><button class="drop" aria-label="More"><svg class="down"><use href="#down"/></svg></button>
      <button aria-label="Measure"><svg><use href="#measure"/></svg></button><button class="drop" aria-label="More"><svg class="down"><use href="#down"/></svg></button>
      <button aria-label="Snap"><svg><use href="#snap"/></svg></button><button class="drop" aria-label="More"><svg class="down"><use href="#down"/></svg></button>
      <button aria-label="Change text"><svg viewBox="0 0 20 20"><text x="-1" y="20" font-size="15" fill="#8b8f94">A</text><text x="10" y="10" font-size="14" fill="#1489d6">B</text><path d="M11 18h4v-5M13 15l2-2 2 2" stroke="#333" fill="none"/></svg></button>
      <button aria-label="Scale"><svg><use href="#scale"/></svg></button><button class="drop" aria-label="More"><svg class="down"><use href="#down"/></svg></button>
      <button aria-label="Palette"><svg><use href="#palette"/></svg></button><button class="drop" aria-label="More"><svg class="down"><use href="#down"/></svg></button>
      <button aria-label="Fence"><svg><use href="#fence"/></svg></button><button class="drop" aria-label="More"><svg class="down"><use href="#down"/></svg></button><i></i>
      <button aria-label="Line"><svg><use href="#linebulb"/></svg></button><button class="drop" aria-label="More"><svg class="down"><use href="#down"/></svg></button>
      <button aria-label="Block"><svg><use href="#rect"/></svg></button><button class="drop" aria-label="More"><svg class="down"><use href="#down"/></svg></button>
      <button class="bigtext">A</button><button class="drop" aria-label="More"><svg class="down"><use href="#down"/></svg></button><i></i>
    </div></div><h2>Common Tools</h2></div>
  <div class="group g-primary"><div class="tools">
    <button class="large"><svg><use href="#explorer"/></svg><span>Explorer</span></button>
    <div class="small c4">
      <button aria-label="Models"><svg><use href="#docblue"/></svg></button><button class="drop" aria-label="More"><svg class="down"><use href="#down"/></svg></button><button aria-label="Level display"><svg><use href="#layerinfo"/></svg></button><i></i>
      <button aria-label="References"><svg><use href="#cube"/></svg></button><i></i><button aria-label="Properties"><svg><use href="#list"/></svg></button><i></i>
      <button aria-label="Levels"><svg><use href="#layers"/></svg></button><i></i><button aria-label="Key-in"><svg viewBox="0 0 20 20"><path d="M1 1h8v8H1zM11 1h8v8h-8zM6 11h8v8H6z" fill="#fff" stroke="#8b8fa5"/><text x="5" y="7" font-size="6" text-anchor="middle">A</text><text x="15" y="7" font-size="6" text-anchor="middle">S</text><text x="10" y="17" font-size="6" text-anchor="middle">Z</text></svg></button><button class="drop" aria-label="More"><svg class="down"><use href="#down"/></svg></button>
    </div></div><h2>Primary</h2></div>
  <div class="group g-attributes"><div class="tools">
    <button class="large up w76"><svg><use href="#attrs"/></svg><span>Attributes<br><svg class="down"><use href="#down"/></svg></span></button>
    </div><h2>Attributes</h2></div>
  <div class="group g-cable"><div class="tools">
    <button class="large w70"><svg><use href="#router"/></svg><span>Raceway<br>Router</span></button>
    <button class="large w70"><svg><use href="#generator"/></svg><span>Raceway<br>Generator</span></button>
    <button class="large w70"><svg viewBox="0 0 40 40"><use href="#trayb" y="13" width="40" height="15"/><path d="M20 24h20v15H20z" fill="#fafafb"/><text class="mono" x="20" y="39" font-size="17" fill="#1a6399">ID</text></svg><span>Raceway<br>IDs</span></button>
    <button class="large up w170"><svg><use href="#autoplace"/></svg><span>AutoPlace Conduit -<br>Raceway to Equipment <svg class="down"><use href="#down"/></svg></span></button>
    <div class="small cc">
      <button aria-label="Tray info"><svg><use href="#traylist"/></svg></button><button aria-label="Query"><svg viewBox="0 0 20 20"><path d="M0 9h6M14 9h6" stroke="#1a6fb0" stroke-width="2"/><text x="10" y="13" font-size="12" font-weight="bold" text-anchor="middle" fill="#1a6fb0">?</text></svg></button>
      <button aria-label="Conduit info"><svg><use href="#condinfo"/></svg></button><i></i>
      <button aria-label="Conduit EC"><svg><use href="#condec"/></svg></button><i></i>
    </div>
    <div class="inner"></div>
    <button class="large w62"><svg><use href="#extend"/></svg><span>Extend<br>Raceway</span></button>
    <button class="large w52"><svg><use href="#insert"/></svg><span>Insert<br>Part</span></button>
    <button class="large w62"><svg><use href="#modify"/></svg><span>Modify<br>Raceway</span></button>
    <button class="large w70"><svg><use href="#size"/></svg><span>Raceway<br>Size</span></button>
    <div class="small cc">
      <button aria-label="Wizard"><svg><use href="#wand"/></svg></button><button aria-label="Cut"><svg><use href="#cut"/></svg></button>
      <button aria-label="Bend"><svg><use href="#bend"/></svg></button><button aria-label="Edit bend"><svg><use href="#bendedit"/></svg></button>
      <button aria-label="Repair"><svg><use href="#wrench"/></svg></button><button aria-label="Delete raceway"><svg><use href="#traydel"/></svg></button>
    </div></div><h2>Cable Tray &amp; Conduit</h2></div>
  <div class="group g-supports"><div class="tools">
    <button class="large w92"><svg><use href="#hung"/></svg><span>Center Hung<br>Tray Support</span></button>
    <button class="large w92"><svg><use href="#trapeze"/></svg><span>Trapeze<br>Tray Support</span></button>
    <div class="small cc">
      <button aria-label="Arm"><svg><use href="#arm1"/></svg></button><button aria-label="Edit support"><svg><use href="#globeedit"/></svg></button>
      <button aria-label="Heavy arm"><svg><use href="#arm2"/></svg></button><button aria-label="Move support"><svg><use href="#boxout"/></svg></button>
      <button aria-label="Tapered arm"><svg><use href="#arm3"/></svg></button><i></i>
    </div></div><h2>Supports</h2></div>
  <div class="group g-database"><div class="tools">
    <button class="large w76"><svg><use href="#database"/></svg><span>Update<br>Database</span></button>
    </div><h2>Database</h2></div>
</section>

<main class="view">
  <div class="viewtitle"><svg class="vicon"><use href="#viewicon"/></svg><h2>View 2 - Isometric, Default</h2>
    <div class="viewctl">
      <button aria-label="Minimize view"><svg viewBox="0 0 20 18"><path d="M2 8h16v5H2z" fill="#fff" stroke="#4b5767"/></svg></button>
      <button aria-label="Restore view"><svg viewBox="0 0 20 18"><path d="M4 3h12v12H4z" fill="none" stroke="#4b5767" stroke-width="5"/><path d="M4 3h12v12H4z" fill="none" stroke="#fff" stroke-width="3"/></svg></button>
      <button class="x" aria-label="Close view"><svg viewBox="0 0 20 18"><path d="M4 3l12 12M16 3L4 15" stroke="#4b3a40" stroke-width="6"/><path d="M4 3l12 12M16 3L4 15" stroke="#fff" stroke-width="4"/></svg></button>
    </div></div>
  <div class="viewbar">
    <button aria-label="View attributes"><svg><use href="#vattr"/></svg></button><button class="drop" aria-label="More"><svg class="down"><use href="#down"/></svg></button><i></i>
    <button class="sub" aria-label="Display style"><svg><use href="#vdisplay"/></svg></button>
    <button aria-label="Brightness"><svg><use href="#sun"/></svg></button><button class="drop" aria-label="More"><svg class="down"><use href="#down"/></svg></button>
    <hr>
    <button aria-label="Update view"><svg><use href="#brush"/></svg></button>
    <button aria-label="Zoom in"><svg><use href="#zoomin"/></svg></button>
    <button aria-label="Zoom out"><svg><use href="#zoomout"/></svg></button>
    <button aria-label="Window area"><svg><use href="#zoomwin"/></svg></button>
    <button aria-label="Fit view"><svg><use href="#fit"/></svg></button>
    <button class="sub" aria-label="Rotate view"><svg><use href="#rotate"/></svg></button>
    <button aria-label="Pan"><svg><use href="#hand"/></svg></button>
    <hr>
    <button aria-label="Walk"><svg><use href="#walk"/></svg></button>
    <button aria-label="View previous"><svg><use href="#prev"/></svg></button>
    <button aria-label="View next"><svg><use href="#next"/></svg></button>
    <hr>
    <button aria-label="Copy view"><svg><use href="#copyview"/></svg></button>
    <button class="sub" aria-label="Perspective"><svg><use href="#persp"/></svg></button>
    <button class="sub" aria-label="Clip volume"><svg><use href="#clipvol"/></svg></button>
    <button aria-label="Clip mask"><svg><use href="#clipmask"/></svg></button>
  </div>
  <div class="canvas">
    <svg class="triad" viewBox="0 0 80 80"><path d="M10 43V22H1L19 1l17 21h-8v21z" fill="#0a2a12" stroke="#1fae2c" stroke-dasharray="7 2"/><path d="M13 20l6 8 6-8M19 28v9" stroke="#9cae9c" stroke-width="2" fill="none"/><circle cx="18.500" cy="56.500" r="8.500" fill="#05053c" stroke="#2323b4"/><path d="M18.500 52.500l4 4-4 4-4-4z" fill="#2c2cd4"/><path d="M32 47h20V39l21 17-21 17v-8H32z" fill="#2a1014" stroke="#a81717" stroke-dasharray="7 2"/><path d="M40 50l14 12M54 50L40 62" stroke="#b5a2a2" stroke-width="2"/></svg>
    <svg class="cab one"><use href="#cabinet"/></svg>
    <svg class="cab two"><use href="#cabinet"/></svg>
    <svg class="pointer" viewBox="0 0 12 19"><path d="M1 1v14l3-3 3 6 2-1-2-6h4z" fill="#fff"/></svg>
    <span class="dot"></span>
  </div>
</main>

<aside class="dialog">
  <div class="dtitle"><svg><use href="#tools"/></svg><h2>Element Selection</h2>
    <button aria-label="Minimize"><svg viewBox="0 0 14 14"><path d="M1 6.500h12" stroke="#777"/></svg></button>
    <button aria-label="Maximize" disabled><svg viewBox="0 0 14 14"><path d="M1.500 1.500h11v11h-11z" stroke="#e2e2e2" fill="none"/></svg></button>
    <button aria-label="Close"><svg viewBox="0 0 14 14"><path d="M1 1l12 12M13 1L1 13" stroke="#777"/></svg></button></div>
  <div class="dbody">
    <div class="drow"><div class="picks"><button class="on" aria-label="Individual"><svg><use href="#selpoint"/></svg></button><button aria-label="Block"><svg><use href="#selblock"/></svg></button><button aria-label="Shape"><svg><use href="#selshape"/></svg></button><button aria-label="Circle"><svg><use href="#selcircle"/></svg></button><button aria-label="Line"><svg><use href="#selline"/></svg></button></div><button class="side" aria-label="Disable handles"><svg><use href="#disable"/></svg></button></div>
    <div class="drow"><div class="picks"><button class="on" aria-label="New"><svg><use href="#selnew"/></svg></button><button aria-label="Add"><svg><use href="#seladd"/></svg></button><button aria-label="Subtract"><svg><use href="#selsub"/></svg></button><button aria-label="Invert"><svg><use href="#selinv"/></svg></button><button aria-label="Select all"><svg><use href="#selall"/></svg></button></div><button class="side" aria-label="Handles"><svg><use href="#handles"/></svg></button><button class="expand" aria-label="Expand"><svg><use href="#down"/></svg></button></div>
  </div>
</aside>

<footer>
  <div class="bottombar">
    <div class="nav"><span class="grip"></span>
      <button aria-label="Back" disabled><svg><use href="#back"/></svg></button><button class="drop" aria-label="History"><svg class="down"><use href="#down"/></svg></button>
      <button aria-label="Forward" disabled><svg><use href="#fwd"/></svg></button><button class="drop" aria-label="History"><svg class="down"><use href="#down"/></svg></button>
      <button aria-label="Dial" disabled><svg><use href="#dial"/></svg></button><button class="drop" aria-label="More"><svg class="down"><use href="#down"/></svg></button>
      <label class="combo viewgroup"><svg class="vg"><use href="#views"/></svg><select aria-label="View group"><option>Default</option></select><svg class="down dark"><use href="#down"/></svg></label>
      <hr><button aria-label="Manage view groups"><svg><use href="#views"/></svg></button>
    </div>
    <div class="slot"></div><div class="slot"></div><div class="slot"></div>
  </div>
  <div class="status">
    <span class="msg">Element Selection &gt; Settings Saved</span><span class="grip"></span>
    <span class="field mark"><svg class="down"><use href="#down"/></svg></span><span class="field wide"></span>
    <span class="field icon"><svg class="acs"><use href="#acs"/></svg></span>
    <span class="field icon"><svg><use href="#lock"/></svg></span>
    <span class="field name">Default</span>
    <span class="field gap"></span><span class="field icon"></span><span class="field icon"></span><span class="field icon"></span>
    <span class="field icon"><svg><use href="#scroll"/></svg></span><span class="field icon"><svg><use href="#home"/></svg></span><span class="field icon"></span><span class="field icon"><svg><use href="#book"/></svg></span><span class="field icon"></span><span class="field icon"><svg><use href="#box3d"/></svg></span><span class="field icon"><svg><use href="#globex"/></svg></span>
  </div>
  <div class="strip"></div>
</footer>

<p class="callout">Automatically generate<br>conduits between equipment</p>
</body>
</html>
```
FILE: styles.css
```css
* { box-sizing: border-box; }
body {
  margin: 0;
  min-height: 100vh;
  position: relative;
  display: flex;
  flex-direction: column;
  background: #f0f0f0;
  border-top: 1px solid #0078d7;
  border-left: 1px solid #0078d7;
  color: #222;
  font: 14px/16px "Noto Sans", "Open Sans", sans-serif;
}
h1, h2, p { margin: 0; font-size: 14px; font-weight: 400; }
svg { display: block; flex: none; overflow: visible; }
.sprite { position: absolute; width: 0; height: 0; }
button { padding: 0; border: 0; background: none; color: inherit; font: inherit; display: flex; align-items: center; justify-content: center; flex: none; }
select { appearance: none; border: 0; background: none; font: inherit; color: inherit; padding: 0; width: 100%; height: 100%; }
svg.down { width: 8px; height: 5px; fill: #666; }
svg.dark { fill: #000; width: 10px; height: 6px; }
svg.tiny { width: 16px; height: 16px; }
.mono { font-family: "Liberation Mono", monospace; }
.drop { width: 16px; }

/* title bar */
.titlebar { display: flex; align-items: center; height: 35px; padding-left: 5px; }
.logo { width: 24px; height: 26px; }
.combo { display: flex; align-items: center; border: 1px solid #b9b9c6; }
.workflow { width: 200px; height: 28px; margin-left: 9px; padding: 0 6px 0 4px; }
.quick { display: flex; align-items: center; margin-left: 4px; }
.quick button { width: 28px; height: 28px; }
.quick .drop { width: 14px; }
.quick svg:not(.down):not(.tiny) { width: 20px; height: 20px; }
.quick svg.tiny { width: 10px; height: 12px; }
.titlebar h1 { flex: 1; text-align: right; padding-right: 27px; white-space: nowrap; margin-top: 4px; }
.search { display: flex; width: 242px; height: 28px; border: 1px solid #999; background: #fff; }
.search input { flex: 1; min-width: 0; border: 0; padding: 0 0 4px 6px; font: italic 14px/16px "Noto Sans", sans-serif; background: none; }
.search input::placeholder { color: #666; opacity: 1; }
.search button { width: 24px; }
.search .searchdrop { width: 22px; border-left: 1px solid #ccc; }
.account { display: flex; align-items: center; margin-left: 4px; }
.account button { width: 30px; }
.account .drop { width: 20px; }
.account svg.mid { width: 24px; height: 24px; }
.account svg.big { width: 28px; height: 28px; }
.account .avatar { width: 26px; height: 26px; border-radius: 13px; background: #2f9bdc; color: #fff; font-size: 12px; }
.winctl { display: flex; padding-right: 1px; }
.winctl button { width: 28px; }
.winctl svg { width: 14px; height: 14px; }

/* ribbon tabs */
.tabs { display: flex; height: 30px; border-bottom: 1px solid #c6c6d2; }
.tabs a { padding: 8px 19px 0 18px; color: #222; text-decoration: none; white-space: nowrap; }
.tabs .file { background: #0078d4; color: #fff; width: 58px; padding: 7px 0 0; text-align: center; height: 29px; }
.tabs .active { margin: 0 2px; padding: 7px 16px 0; background: #fafafb; border: 1px solid #c6c6d2; border-bottom: 0; height: 30px; }
.collapse { margin-left: auto; width: 38px; padding-top: 4px; }
.collapse svg { width: 14px; height: 8px; }

/* ribbon */
.ribbon { display: flex; height: 119px; background: #fafafb; padding-top: 2px; border-bottom: 1px solid #dcdce4; }
.group { display: flex; flex-direction: column; height: 115px; border-right: 1px solid #c6c6d2; }
.group h2 { text-align: center; }
.tools { display: flex; height: 97px; padding: 5px 4px 0 6px; }
.g-selection { width: 146px; }
.g-common { width: 171px; }
.g-primary { width: 162px; }
.g-attributes { width: 84px; }
.g-cable { width: 763px; }
.g-supports { width: 251px; }
.g-database { width: 82px; }
.g-selection .tools { padding-left: 8px; }
.g-cable .tools { padding-left: 3px; }
.g-supports .tools { padding-left: 5px; }
.g-attributes .large, .g-database .large { margin: 0 -2px; }
.large { flex-direction: column; justify-content: flex-start; align-self: flex-start; padding-top: 2px; white-space: nowrap; line-height: 16px; }
.large > svg { width: 40px; height: 40px; }
.large span { padding-top: 7px; text-align: center; }
.up span { padding-top: 3px; }
.large .down { display: inline-block; vertical-align: middle; }
.g-selection .large { width: 88px; }
.g-primary .large { width: 64px; }
.w52 { width: 52px; }
.w62 { width: 62px; }
.w70 { width: 70px; }
.w76 { width: 76px; }
.w92 { width: 92px; }
.w170 { width: 170px; margin-right: 7px; }
.small { display: grid; grid-auto-rows: 28px; align-content: start; }
.small button svg:not(.down):not(.tiny) { width: 20px; height: 20px; }
.small .bigtext { font: bold 24px/28px "Noto Sans", sans-serif; color: #1489d6; }
.c2 { grid-template-columns: 28px 18px; }
.c4 { grid-template-columns: 28px 16px 28px 16px; }
.c7 { grid-template-columns: 28px 16px 28px 16px 28px 16px 28px; }
.cc { grid-template-columns: 28px 28px; }
.inner { width: 1px; height: 74px; margin: 4px 8px 0 3px; background: #c6c6d2; }

/* view window */
.view {
  flex: 1;
  min-height: 600px;
  margin-right: 2px;
  display: flex;
  flex-direction: column;
  padding: 0 8px 8px 9px;
  border-top: 2px solid #28303c;
  border-right: 1px solid #39c3e0;
  border-bottom: 1px solid #000;
  border-radius: 5px 5px 0 0;
  background: linear-gradient(#98b3d0, #b8cfea 38px, #c9dcf0 110px, #bfd2ee 130px, #bfd2ee);
}
.viewtitle { display: flex; align-items: center; height: 36px; padding-left: 2px; }
.viewtitle h2 { margin-left: 4px; padding-top: 5px; }
.vicon { width: 20px; height: 20px; margin-top: 4px; }
.viewctl { display: flex; gap: 2px; margin: 6px 2px 0 auto; }
.viewctl button { width: 42px; height: 24px; border: 1px solid #5d7088; border-radius: 2px; background: linear-gradient(#c3d6eb 45%, #9ab4d1 50%, #b3cae3); }
.viewctl .x { border-color: #5b1f1c; background: linear-gradient(#e09a8c 45%, #bd3a26 50%, #cc6a4c); }
.viewctl svg { width: 20px; height: 18px; }
.viewbar { display: flex; align-items: center; height: 30px; background: #f0f0f0; padding-left: 2px; }
.viewbar button { width: 28px; height: 28px; position: relative; }
.viewbar svg { width: 23px; height: 23px; }
.viewbar .drop { width: 16px; }
.viewbar .drop .down { width: 9px; height: 6px; fill: #000; }
.viewbar i { width: 3px; }
.viewbar hr { width: 1px; height: 27px; border: 0; background: #999; margin: 0 3px; }
.viewbar .sub::after { content: ""; position: absolute; right: 2px; bottom: 0; border: 4px solid transparent; border-top-color: #000; border-bottom: 0; }
.canvas { flex: 1; background: #020203; position: relative; overflow: hidden; }
.triad { position: absolute; left: 41px; top: 4px; width: 80px; height: 80px; }
.cab { position: absolute; top: 242px; width: 80px; height: 260px; }
.one { left: 651px; }
.two { left: 942px; }
.pointer { position: absolute; left: 797px; top: 35px; width: 12px; height: 19px; }
.dot { position: absolute; right: 55px; bottom: -3px; width: 13px; height: 13px; border-radius: 50%; background: #555; border: 2px solid #bbb; }

/* floating tool settings */
.dialog { position: absolute; top: 226px; right: 121px; width: 344px; height: 156px; border: 1px solid #888; background: #f0f0f0; }
.dtitle { display: flex; align-items: center; height: 37px; background: #fff; padding: 0 1px 0 9px; color: #888; }
.dtitle > svg { width: 20px; height: 20px; }
.dtitle h2 { margin: 0 auto 0 5px; }
.dtitle button { width: 58px; }
.dtitle button svg { width: 14px; height: 14px; }
.dbody { padding: 16px 15px 0; display: grid; gap: 20px; }
.drow { display: flex; align-items: center; position: relative; }
.picks { display: flex; gap: 1px; width: 150px; height: 33px; padding: 2px; border: 1px solid #999; border-right-color: #fff; border-bottom-color: #fff; }
.picks button { width: 28px; height: 28px; }
.picks svg { width: 23px; height: 23px; }
.picks .on { background: #7ab3e4; border: 1px solid #3a7cc4; }
.side { margin-left: 29px; }
.side svg { width: 28px; height: 28px; }
.expand { margin: 20px 2px 0 auto; }
.expand svg { width: 10px; height: 6px; }

/* bottom bars */
.bottombar { display: flex; height: 41px; background: #d6d6d6; }
.nav { display: flex; align-items: center; width: 597px; background: #f0f0f0; padding-left: 2px; }
.nav > button svg { width: 32px; height: 32px; }
.nav > button { width: 34px; }
.nav > .drop { width: 21px; }
.nav > .drop svg { width: 10px; height: 6px; fill: #555; }
.grip { width: 2px; height: 26px; margin-right: 5px; border-left: 2px dotted #999; }
.nav .combo { width: 198px; height: 27px; border-color: #999; background: #e1e1e1; padding: 0 7px 0 1px; gap: 6px; }
.vg { width: 24px; height: 24px; }
.nav hr { width: 1px; height: 34px; border: 0; background: #999; margin: 0 4px 0 3px; }
.slot { width: 174px; background: #f0f0f0; border-right: 1px solid #aaa; }
.slot:last-child { border: 0; }
.status { display: flex; align-items: center; height: 40px; border-top: 1px solid #ddd; padding-right: 5px; }
.msg { width: 388px; padding-left: 3px; }
.status .grip { margin-right: 4px; }
.field { height: 32px; border-left: 1px solid #777; display: flex; align-items: center; justify-content: center; }
.mark { width: 39px; align-items: flex-start; justify-content: flex-end; padding: 2px 0 0; }
.mark svg.down { fill: #000; transform: rotate(180deg); width: 6px; height: 4px; }
.wide { flex: 1; }
.icon { width: 40px; }
.icon svg { width: 24px; height: 24px; }
.icon svg.acs { width: 32px; height: 32px; }
.name { width: 175px; justify-content: flex-start; padding-left: 4px; }
.gap { width: 155px; }
.strip { height: 2px; background: linear-gradient(90deg, #0a1020 60px, #c9c9cd 60px, #c9c9cd 490px, #0a1020 490px); }

/* caption */
.callout {
  position: absolute;
  left: 409px;
  bottom: 45px;
  width: 906px;
  padding: 15px 0;
  border: 2px solid #04ae90;
  border-radius: 8px;
  background: #fefefd;
  color: #04ae90;
  text-align: center;
  white-space: nowrap;
  font: 59px/71px "DejaVu Sans", sans-serif;
  -webkit-text-stroke: 1px #04ae90;
}
```
